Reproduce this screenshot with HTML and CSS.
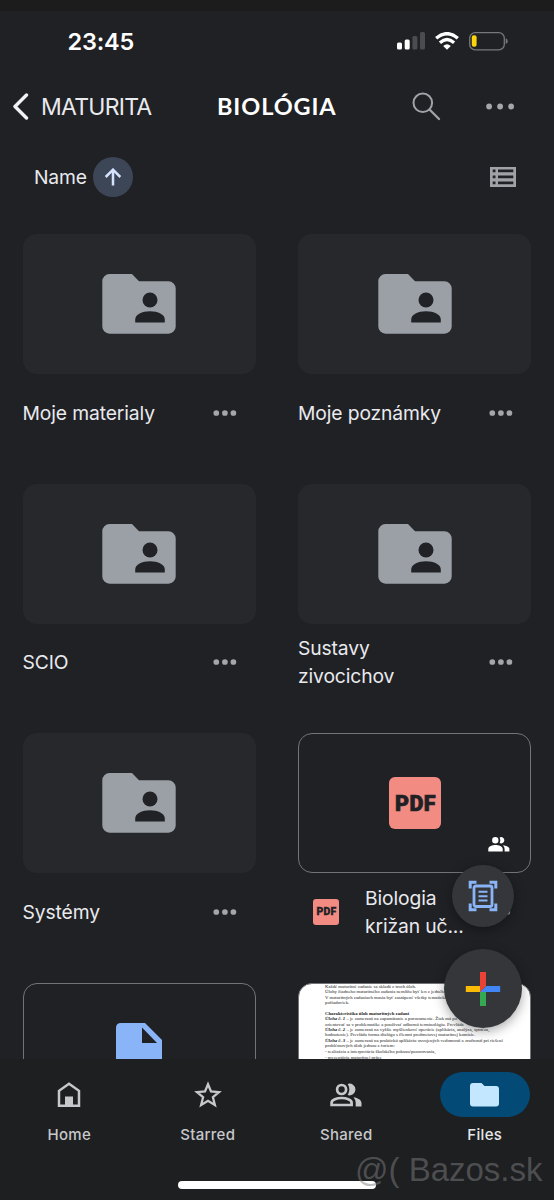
FILE: index.html
```html
<!DOCTYPE html>
<html lang="sk">
<head>
<meta charset="utf-8">
<title>BIOLÓGIA</title>
<link rel="stylesheet" href="styles.css">
</head>
<body>
<svg class="defs" width="0" height="0">
  <symbol id="folder" viewBox="0 0 74 60">
    <path fill="#9aa0a6" d="M7.500 0H30L37 7.300H66.500A7.200 7.200 0 0 1 73.700 14.500V52.500A7.200 7.200 0 0 1 66.500 59.700H7.500A7.200 7.200 0 0 1 .3 52.500V7.300A7.200 7.200 0 0 1 7.500 0Z"/>
    <circle cx="48" cy="26" r="7.500" fill="#212226"/>
    <path fill="#212226" d="M33.200 48.600V45.500C33.200 40.500 40 37.300 48 37.300S62.800 40.500 62.800 45.500V48.600Z"/>
  </symbol>
  <symbol id="dots" viewBox="0 0 24 6">
    <g fill="#a5a6aa"><circle cx="3.300" cy="3" r="2.850"/><circle cx="11.900" cy="3" r="2.850"/><circle cx="20.400" cy="3" r="2.850"/></g>
  </symbol>
</svg>
<main class="screen">
  <div class="strip"></div>
  <div class="status">
    <span class="clock">23:45</span>
    <svg class="signal" width="28" height="18" viewBox="0 0 28 18"><g fill="#fff"><rect x="0" y="10.500" width="5" height="7" rx="1.500"/><rect x="7.700" y="7.500" width="5" height="10" rx="1.500"/></g><g fill="#4b4c50"><rect x="15.400" y="4" width="5" height="13.500" rx="1.500"/><rect x="23" y="0" width="5" height="17.500" rx="1.500"/></g></svg>
    <svg class="wifi" width="24" height="18" viewBox="0 0 24 18"><g fill="none" stroke="#fff" stroke-width="3.400"><path d="M1.200 6.300Q12-3 22.800 6.300"/><path d="M4.900 10.700Q12 4.500 19.100 10.700"/></g><path fill="#fff" d="M8.200 14Q12 10.700 15.800 14L12 17.800Z"/></svg>
    <svg class="battery" width="39" height="19" viewBox="0 0 39 19"><rect x=".7" y=".7" width="34.600" height="17.200" rx="5.500" fill="none" stroke="#77787b" stroke-width="1.300"/><rect x="2.800" y="3.200" width="4.800" height="11.600" rx="2" fill="#fbd40b"/><path fill="#77787b" d="M36.700 6.300Q38.700 7 38.700 9.200T36.700 12.100Z"/></svg>
  </div>
  <header class="header">
    <svg width="17" height="27" viewBox="0 0 17 27"><path d="M14.500 2 3 13.500 14.500 25" fill="none" stroke="#f1f2f6" stroke-width="3.400" stroke-linecap="round" stroke-linejoin="round"/></svg>
    <span class="back">MATURITA</span>
    <h1 class="title">BIOLÓGIA</h1>
    <svg class="search" width="29" height="29" viewBox="0 0 29 29"><g fill="none" stroke="#a1a2a7" stroke-width="2"><circle cx="10.800" cy="10.800" r="9.300"/><path d="m17.500 17.500 9.500 9.500" stroke-width="2.300" stroke-linecap="round"/></g></svg>
    <svg class="more" width="29" height="7" viewBox="0 0 29 7"><g fill="#a5a6aa"><circle cx="3.100" cy="3.500" r="2.900"/><circle cx="14.100" cy="3.500" r="2.900"/><circle cx="25.100" cy="3.500" r="2.900"/></g></svg>
  </header>
  <div class="sort">
    <span class="sort-name">Name</span>
    <span class="sort-dir"><svg width="18" height="18" viewBox="0 0 18 18"><path d="M9 17.500V2.500M1.700 9 9 1.700 16.300 9" fill="none" stroke="#d3e3fd" stroke-width="2.500"/></svg></span>
    <svg class="list" width="26" height="20" viewBox="0 0 26 20"><path fill="#a1a2a7" fill-rule="evenodd" d="M0 0H26V20H0ZM2.700 2.500V5.300H5.500V2.500ZM8 2.500V5.300H23.300V2.500ZM2.700 8.500V11.300H5.500V8.500ZM8 8.500V11.300H23.300V8.500ZM2.700 14.500V17.300H5.500V14.500ZM8 14.500V17.300H23.300V14.500Z"/></svg>
  </div>
  <section class="grid">
    <article class="item"><div class="card"><svg width="74" height="60"><use href="#folder"/></svg></div><div class="label"><span class="name">Moje materialy</span><svg width="24" height="6"><use href="#dots"/></svg></div></article>
    <article class="item"><div class="card"><svg width="74" height="60"><use href="#folder"/></svg></div><div class="label"><span class="name">Moje poznámky</span><svg width="24" height="6"><use href="#dots"/></svg></div></article>
    <article class="item"><div class="card"><svg width="74" height="60"><use href="#folder"/></svg></div><div class="label"><span class="name">SCIO</span><svg width="24" height="6"><use href="#dots"/></svg></div></article>
    <article class="item"><div class="card"><svg width="74" height="60"><use href="#folder"/></svg></div><div class="label"><span class="name">Sustavy<br>zivocichov</span><svg width="24" height="6"><use href="#dots"/></svg></div></article>
    <article class="item"><div class="card"><svg width="74" height="60"><use href="#folder"/></svg></div><div class="label"><span class="name">Systémy</span><svg width="24" height="6"><use href="#dots"/></svg></div></article>
    <article class="item">
      <div class="card outlined">
        <span class="pdf">PDF</span>
        <svg class="people" width="22" height="15" viewBox="0 0 22 15"><g fill="#fff"><path d="M10.500 3.300a3.200 3.200 0 1 1-6.400 0 3.200 3.200 0 0 1 6.400 0ZM.3 14.400V12C.3 9.400 4.500 8 7.500 8s7.200 1.400 7.200 4v2.400Z"/><path d="M11.600.5a3.200 3.200 0 1 1 0 5.600Q13 3.400 11.600.5ZM14.800 8.200C18 8.500 21.400 9.800 21.400 12v2.400H16.600V12Q16.600 9.700 14.800 8.200Z"/></g></svg>
      </div>
      <div class="label"><span class="pdf small">PDF</span><span class="name file">Biologia<br>križan uč...</span><svg width="24" height="6"><use href="#dots"/></svg></div>
    </article>
    <article class="item"><div class="card outlined doc"><svg width="46" height="60" viewBox="0 0 46 60"><path fill="#8ab4f8" fill-rule="evenodd" d="M5 0H29L46 17V60H0V5Q0 0 5 0ZM26 4.500V20H41Z"/></svg></div></article>
    <article class="item"><div class="card outlined page">
      <p class="line">Každé maturitné zadanie sa skladá z troch úloh.</p>
      <p class="line">Úlohy žiadneho maturitného zadania nemôžu byť len z jedného</p>
      <p class="line">V maturitných zadaniach musia byť zastúpené všetky tematické</p>
      <p class="line">požiadaviek.</p>
      <p class="line gap"><b>Charakteristika úloh maturitných zadaní</b></p>
      <p class="line"><b><i>Úloha č. 1</i></b> – je zameraná na zapamätanie a porozumenie. Žiak má po</p>
      <p class="line">orientovať sa v problematike a používať odbornú terminológiu. Prevláda</p>
      <p class="line"><b><i>Úloha č. 2</i></b> – je zameraná na vyššie myšlienkové operácie (aplikácia, analýza, syntéza,</p>
      <p class="line">hodnotenie). Prevláda forma dialógu s členmi predmetovej maturitnej komisie.</p>
      <p class="line"><b><i>Úloha č. 3</i></b> – je zameraná na praktickú aplikáciu osvojených vedomostí a zručností pri riešení</p>
      <p class="line">problémových úloh jednou z foriem:</p>
      <p class="line">- realizácia a interpretácia školského pokusu/pozorovania,</p>
      <p class="line last">- prezentácia maturitnej práce,</p>
    </div></article>
  </section>
  <button class="fab scan" aria-label="Scan"><svg width="30" height="32" viewBox="0 0 30 32"><g fill="none" stroke="#8ab4f8"><path stroke-width="3" d="M2.200 8.500V2.200H8.500M21.500 2.200H27.800V8.500M27.800 23.500V29.800H21.500M8.500 29.800H2.200V23.500"/><rect x="6" y="6" width="18" height="20.500" rx="2" stroke-width="2.800"/><path stroke-width="2" d="M10.500 11.800H19.500M10.500 16.200H19.500M10.500 20.600H19.500"/></g></svg></button>
  <button class="fab add" aria-label="Add"><svg width="36" height="36" viewBox="0 0 36 36"><path fill="#fabb05" d="M.8 15H18L15 21H.8Z"/><path fill="#34a853" d="M15 21 18 18 21 21V35H15Z"/><path fill="#4285f4" d="M21 15H35.200V21H15Z"/><path fill="#ea4335" d="M15 1H21V15L15 21Z"/></svg></button>
  <nav class="nav">
    <a class="tab"><span class="pill"><svg width="24" height="26" viewBox="0 0 24 26"><path fill="none" stroke="#c7c8cb" stroke-width="2.500" d="M2 23.800V8.800L12 1.700 22 8.800V23.800Z"/><path fill="#c7c8cb" d="M8 14.500H16V24H8Z"/></svg></span>Home</a>
    <a class="tab"><span class="pill"><svg width="28" height="27" viewBox="0 0 28 27"><path fill="none" stroke="#c7c8cb" stroke-width="2.300" d="M14 3.200 17 10.500 25 11.100 18.900 16.200 20.900 24 14 19.800 7.100 24 9.100 16.200 3 11.100 11 10.500Z"/></svg></span>Starred</a>
    <a class="tab"><span class="pill"><svg width="32" height="24" viewBox="0 0 32 24"><g fill="none" stroke="#c7c8cb" stroke-width="2.700"><circle cx="11.600" cy="6.500" r="4.500"/><path d="M1.600 22V19.800C1.600 16.700 7 15 11.600 15S21.600 16.700 21.600 19.800V22Z"/></g><g fill="#c7c8cb"><path d="M17.700.9A5.900 5.900 0 1 1 17.700 12.100Q21 6.500 17.700.9ZM23.500 14.200C28 15 31.500 17 31.500 20V23.400H25.700V20Q25.700 16.500 23.500 14.200Z"/></g></svg></span>Shared</a>
    <a class="tab active"><span class="pill"><svg width="29" height="24" viewBox="0 0 29 24"><path fill="#c2e7ff" d="M3 0H11.500L14.500 3H26Q29 3 29 6V20.500Q29 23.500 26 23.500H3Q0 23.500 0 20.500V3Q0 0 3 0Z"/></svg></span>Files</a>
  </nav>
  <div class="home-bar"></div>
  <div class="watermark">@( Bazos.sk</div>
</main>
</body>
</html>
```
FILE: styles.css
```css
* { box-sizing: border-box; }
body { margin: 0; background: #202125; font-family: Inter, "Noto Sans", sans-serif; color: #e9eaee; }
.defs { position: absolute; }
.screen { position: relative; width: 554px; height: 1200px; overflow: hidden; }
.strip { height: 11px; background: #1c1c1c; }
.status { height: 60px; display: flex; align-items: center; padding: 0 46px 0 67.500px; }
.clock { font-size: 23.5px; font-weight: 600; color: #fff; letter-spacing: -.2px; flex: 1; }
.wifi { margin: 0 10px; }
.header { height: 71px; display: flex; align-items: center; padding: 0 39px 0 12px; }
.back { width: 176px; padding-left: 12px; font-size: 23px; letter-spacing: -.75px; }
.title { margin: 0; width: 206px; padding: 0 0 2px 12px; font-family: Lato, sans-serif; font-size: 23.5px; font-weight: 700; letter-spacing: .9px; color: #fff; }
.search { margin-left: 1px; }
.more { margin-left: auto; }
.sort { height: 71px; display: flex; align-items: center; padding: 0 38px 2px 34px; }
.sort-name { width: 59px; font-size: 19.3px; letter-spacing: -.2px; }
.sort-dir { width: 40px; height: 40px; border-radius: 50%; background: #3c4657; display: flex; align-items: center; justify-content: center; }
.list { margin-left: auto; }
.grid { height: 846px; padding: 21px 23px 0 22.500px; overflow: hidden; display: grid; grid-template-columns: 233px 233px; grid-auto-rows: 249.700px; column-gap: 42.500px; align-content: start; }
.card { position: relative; height: 140px; border-radius: 14px; background: #27282c; display: flex; align-items: center; justify-content: center; }
.outlined { background: none; border: 1px solid #737478; }
.label { height: 77.500px; display: flex; align-items: center; padding-right: 18.500px; }
.name { flex: 1; font-size: 19.3px; line-height: 28px; letter-spacing: -.12px; white-space: nowrap; }
.pdf { width: 52px; height: 52px; border-radius: 6px; background: #f28b82; color: #202125; display: flex; align-items: center; justify-content: center; font: 900 21.500px/1 Roboto, sans-serif; letter-spacing: .5px; padding: 1px 0 0 2px; -webkit-text-stroke: .7px #202125; }
.pdf.small { width: 26px; height: 26px; border-radius: 3px; font-size: 10.500px; letter-spacing: .2px; margin: 0 26px 0 15px; padding: 0 0 0 1px; -webkit-text-stroke-width: .3px; }
.file { margin-right: 2px; }
.file + svg { margin-right: 2px; }
.people { position: absolute; right: 20px; bottom: 20px; }
.page { display: block; overflow: hidden; background: #fff; padding: 0 0 0 26px; color: #222; }
.line { margin: 0; font: 4.780px/5.400px "Liberation Serif", serif; white-space: nowrap; }
.gap { margin-top: 5px; }
.last { margin-top: 1px; }
.fab { position: absolute; border: 0; padding: 0; border-radius: 50%; background: #353639; display: flex; align-items: center; justify-content: center; box-shadow: 0 3px 12px rgba(0,0,0,.35); }
.scan { left: 452px; top: 865px; width: 62px; height: 62px; }
.add { left: 444px; top: 949px; width: 78px; height: 79px; }
.nav { height: 141px; background: #1e1f21; display: grid; grid-template-columns: repeat(4, 1fr); position: relative; }
.tab { display: flex; flex-direction: column; align-items: center; padding-top: 13px; font-size: 15px; line-height: 18px; font-weight: 500; letter-spacing: .3px; color: #c7c8cb; }
.pill { width: 90px; height: 45px; border-radius: 23px; margin-bottom: 9px; display: flex; align-items: center; justify-content: center; }
.active { color: #e6e7ea; }
.active .pill { background: #044a77; }
.home-bar { position: absolute; left: 178px; top: 1181px; width: 198px; height: 8px; border-radius: 4px; background: #fff; }
.watermark { position: absolute; left: 355px; top: 1150px; font: 33px/40px "Liberation Sans", sans-serif; color: rgba(125,125,128,.5); white-space: nowrap; }
```
